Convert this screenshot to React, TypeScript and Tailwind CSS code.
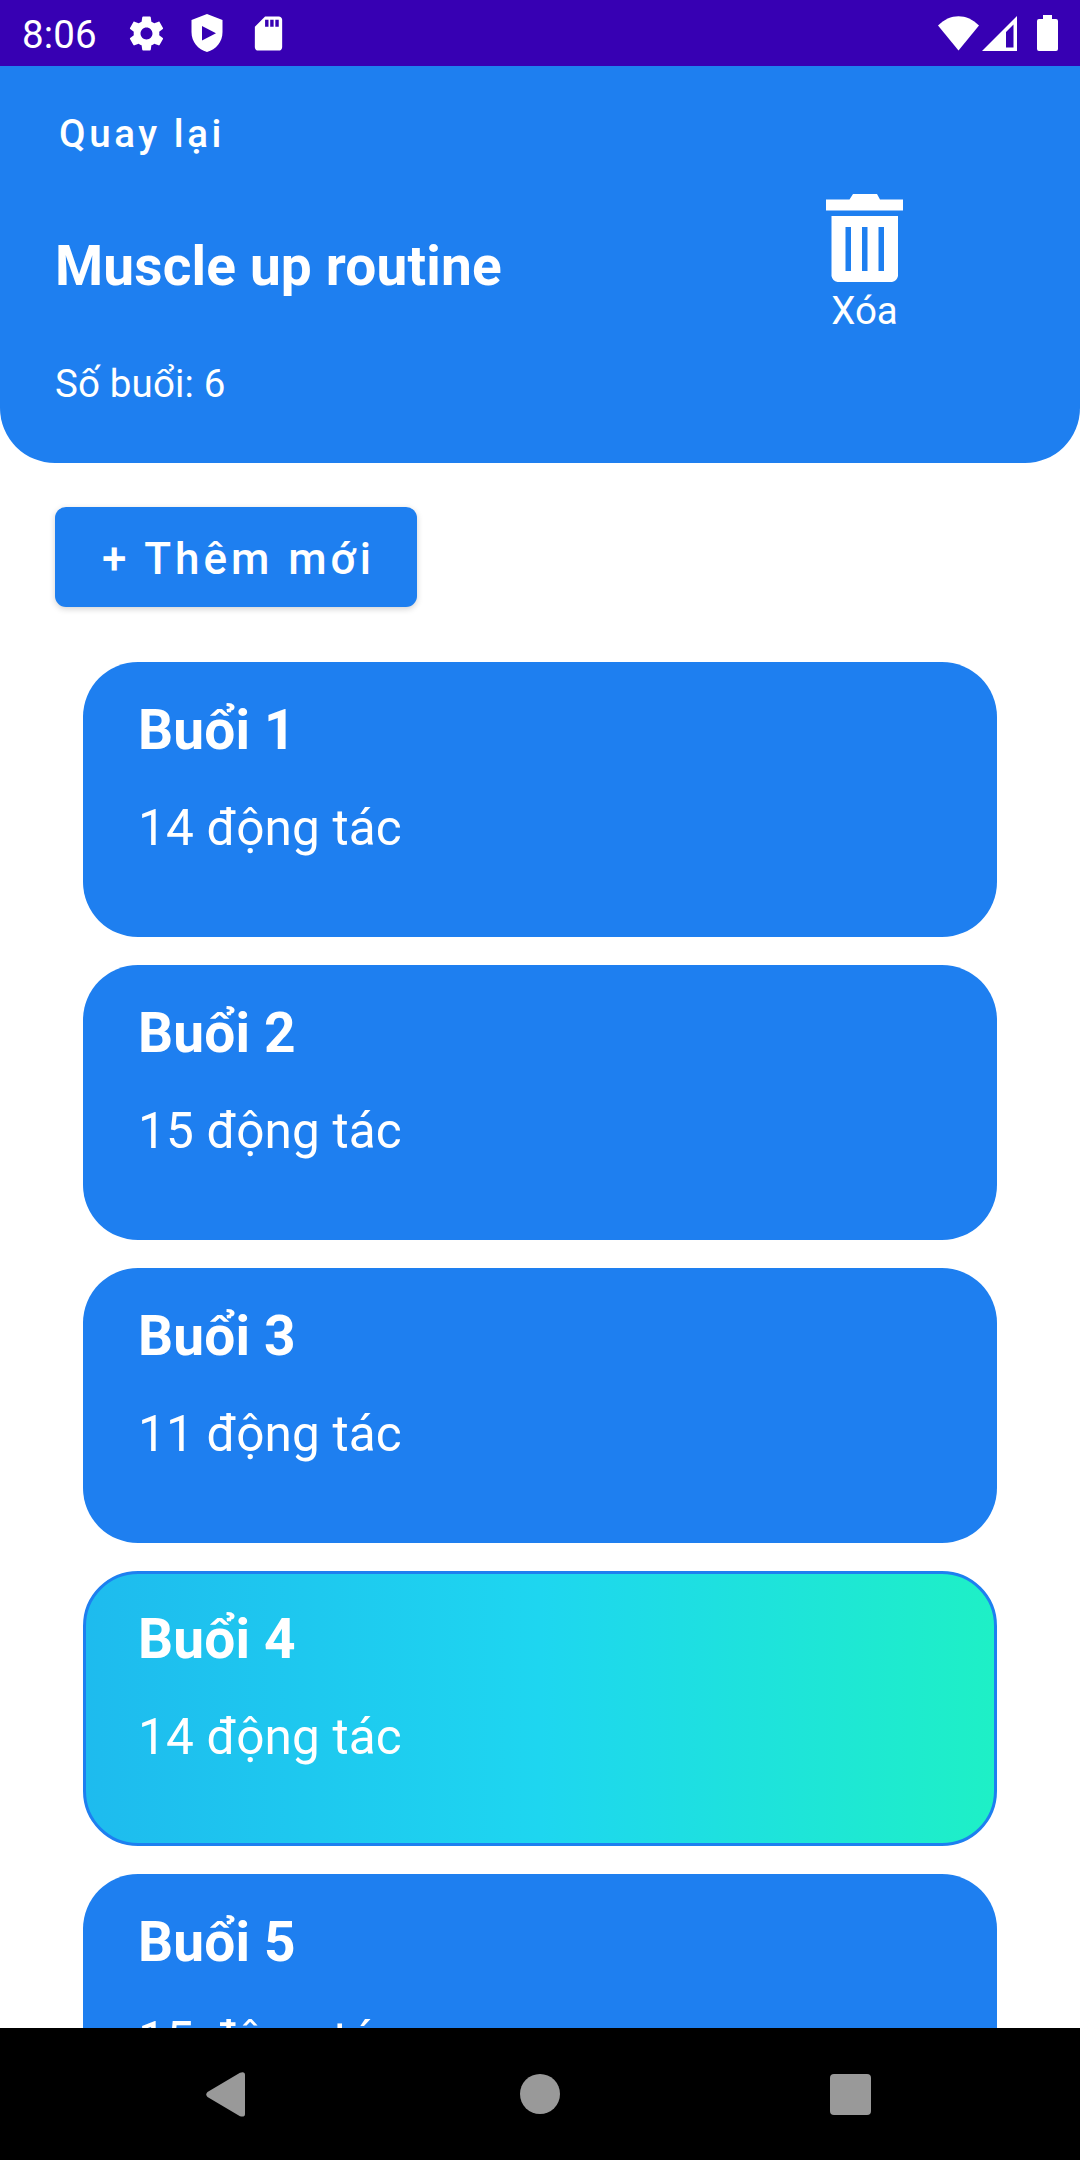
import React from "react";

const sessions = [
  { title: "Buổi 1", detail: "14 động tác", active: false },
  { title: "Buổi 2", detail: "15 động tác", active: false },
  { title: "Buổi 3", detail: "11 động tác", active: false },
  { title: "Buổi 4", detail: "14 động tác", active: true },
  { title: "Buổi 5", detail: "15 động tác", active: false },
];

function StatusBar() {
  return (
    <div className="flex h-[66px] shrink-0 items-center bg-[#3700b3] pl-[22px] pr-[22px] text-white">
      <span className="w-[104px] pt-[3px] text-[38.5px] leading-[45px] tracking-[0.15px]">8:06</span>
      <svg className="h-[41px] w-[41px]" viewBox="0 0 24 24" fill="currentColor">
        <path d="M19.43 12.98c.04-.32.07-.64.07-.98s-.03-.66-.07-.98l2.11-1.65c.19-.15.24-.42.12-.64l-2-3.46c-.12-.22-.39-.3-.61-.22l-2.49 1c-.52-.4-1.08-.73-1.69-.98l-.38-2.65C14.46 2.18 14.25 2 14 2h-4c-.25 0-.46.18-.49.42l-.38 2.65c-.61.25-1.17.59-1.69.98l-2.49-1c-.23-.09-.49 0-.61.22l-2 3.46c-.13.22-.07.49.12.64l2.11 1.65c-.04.32-.07.65-.07.98s.03.66.07.98l-2.11 1.65c-.19.15-.24.42-.12.64l2 3.46c.12.22.39.3.61.22l2.49-1c.52.4 1.08.73 1.69.98l.38 2.65c.03.24.24.42.49.42h4c.25 0 .46-.18.49-.42l.38-2.65c.61-.25 1.17-.59 1.69-.98l2.49 1c.23.09.49 0 .61-.22l2-3.46c.12-.22.07-.49-.12-.64l-2.11-1.65zM12 15.5c-1.93 0-3.5-1.57-3.5-3.5s1.57-3.5 3.5-3.5 3.5 1.57 3.5 3.5-1.57 3.5-3.5 3.5z" />
      </svg>
      <svg className="ml-[24px] h-[38px] w-[32px]" viewBox="0 0 32 38" fill="currentColor">
        <path fillRule="evenodd" d="M16 0L31.5 6V18C31.5 28 25 35.5 16 38C7 35.5 .5 28 .5 18V6ZM11 12V26.5L25 19.2Z" />
      </svg>
      <svg className="ml-[25px] h-[41px] w-[41px]" viewBox="0 0 24 24" fill="currentColor">
        <path d="M18 2h-8L4.02 8 4 20c0 1.1.9 2 2 2h12c1.1 0 2-.9 2-2V4c0-1.1-.9-2-2-2zm-6 6h-2V4h2v4zm3 0h-2V4h2v4zm3 0h-2V4h2v4z" />
      </svg>
      <svg className="ml-auto h-[35px] w-[41px]" viewBox="0 0 41 35" fill="currentColor">
        <path d="M0 9.500C12-3 29-3 41 9.500L20.500 34.500Z" />
      </svg>
      <svg className="ml-[3px] h-[35px] w-[35px]" viewBox="0 0 35 35" fill="currentColor">
        <path fillRule="evenodd" d="M0 35L35 0V35ZM24 16V31.500H31.500V8.500Z" />
      </svg>
      <svg className="ml-[20px] h-[36px] w-[21px]" viewBox="0 0 21 36" fill="currentColor">
        <path d="M6 0H15V4H19Q21 4 21 6V34Q21 36 19 36H2Q0 36 0 34V6Q0 4 2 4H6Z" />
      </svg>
    </div>
  );
}

function Header() {
  return (
    <header className="flex h-[397px] shrink-0 rounded-b-[55px] bg-[#1e7ff0] pl-[55px] text-white">
      <div className="flex w-[771px] flex-col items-start">
        <button className="mt-[45px] ml-1 text-[38.5px] leading-[45px] font-medium tracking-[3.6px]">Quay lại</button>
        <h1 className="mt-[78px] text-[55px] leading-[64px] font-bold tracking-[0.16px]">Muscle up routine</h1>
        <p className="mt-[63px] text-[38.5px] leading-[45px] tracking-[0.15px]">Số buổi: 6</p>
      </div>
      <button className="mt-[128px] flex w-[77px] flex-col items-center self-start">
        <svg className="h-[88px] w-[77px]" viewBox="0 0 77 88" fill="currentColor">
          <path d="M0 5.500H23.500L27 0H51L54 5.500H77V16.500H0Z" />
          <path fillRule="evenodd" d="M5.500 22H72V82Q71 87 66 88H11.500Q6.500 87 5.500 82ZM19.500 33V77H25V33ZM36 33V77H41.500V33ZM52.500 33V77H58V33Z" />
        </svg>
        <span className="mt-[6px] text-[38.5px] leading-[45px]">Xóa</span>
      </button>
    </header>
  );
}

function NavBar() {
  return (
    <nav className="flex h-[132px] shrink-0 items-center bg-black text-[#999999]">
      <svg className="ml-[206px] h-[46px] w-[40px]" viewBox="0 0 40 46" fill="currentColor">
        <path d="M1.500 21L34 1.700Q39 0 39 4V43Q39 46.500 34 45.300L1.500 26Q-1 23.500 1.500 21Z" />
      </svg>
      <div className="ml-[274px] h-[40px] w-[40px] rounded-full bg-[#999999]" />
      <div className="ml-[270px] mt-px h-[41px] w-[41px] rounded-[4px] bg-[#999999]" />
    </nav>
  );
}

export default function App() {
  return (
    <div className="flex h-[2160px] w-[1080px] flex-col overflow-hidden bg-white font-['Roboto',sans-serif]">
      <StatusBar />
      <Header />
      <main className="flex min-h-0 flex-1 flex-col items-start overflow-hidden pt-[44px]">
        <button className="ml-[55px] flex h-[100px] w-[362px] shrink-0 items-center rounded-[11px] bg-[#1e7ff0] pt-[3px] pl-[47px] text-[44px] leading-[52px] font-medium tracking-[3.96px] whitespace-nowrap text-white shadow-[0_2px_6px_rgba(0,0,0,0.18)]">
          + Thêm mới
        </button>
        <ul className="mt-[55px] ml-[83px] flex w-[914px] flex-col gap-7">
          {sessions.map((s) => (
            <li
              key={s.title}
              className={
                s.active
                  ? "h-[275px] shrink-0 rounded-[55px] border-3 border-[#1e7ff0] bg-linear-[90deg,#1ebbee,#1ed6f0_50%,#1ef0c6] bg-origin-border pt-[33px] pl-[52px] text-white"
                  : "h-[275px] shrink-0 rounded-[55px] bg-[#1e7ff0] pt-[36px] pl-[55px] text-white"
              }
            >
              <h2 className="text-[55px] leading-[64px] font-bold tracking-[0.16px]">{s.title}</h2>
              <p className="mt-[37px] text-[49.5px] leading-[58px] tracking-[0.16px]">{s.detail}</p>
            </li>
          ))}
        </ul>
      </main>
      <NavBar />
    </div>
  );
}
